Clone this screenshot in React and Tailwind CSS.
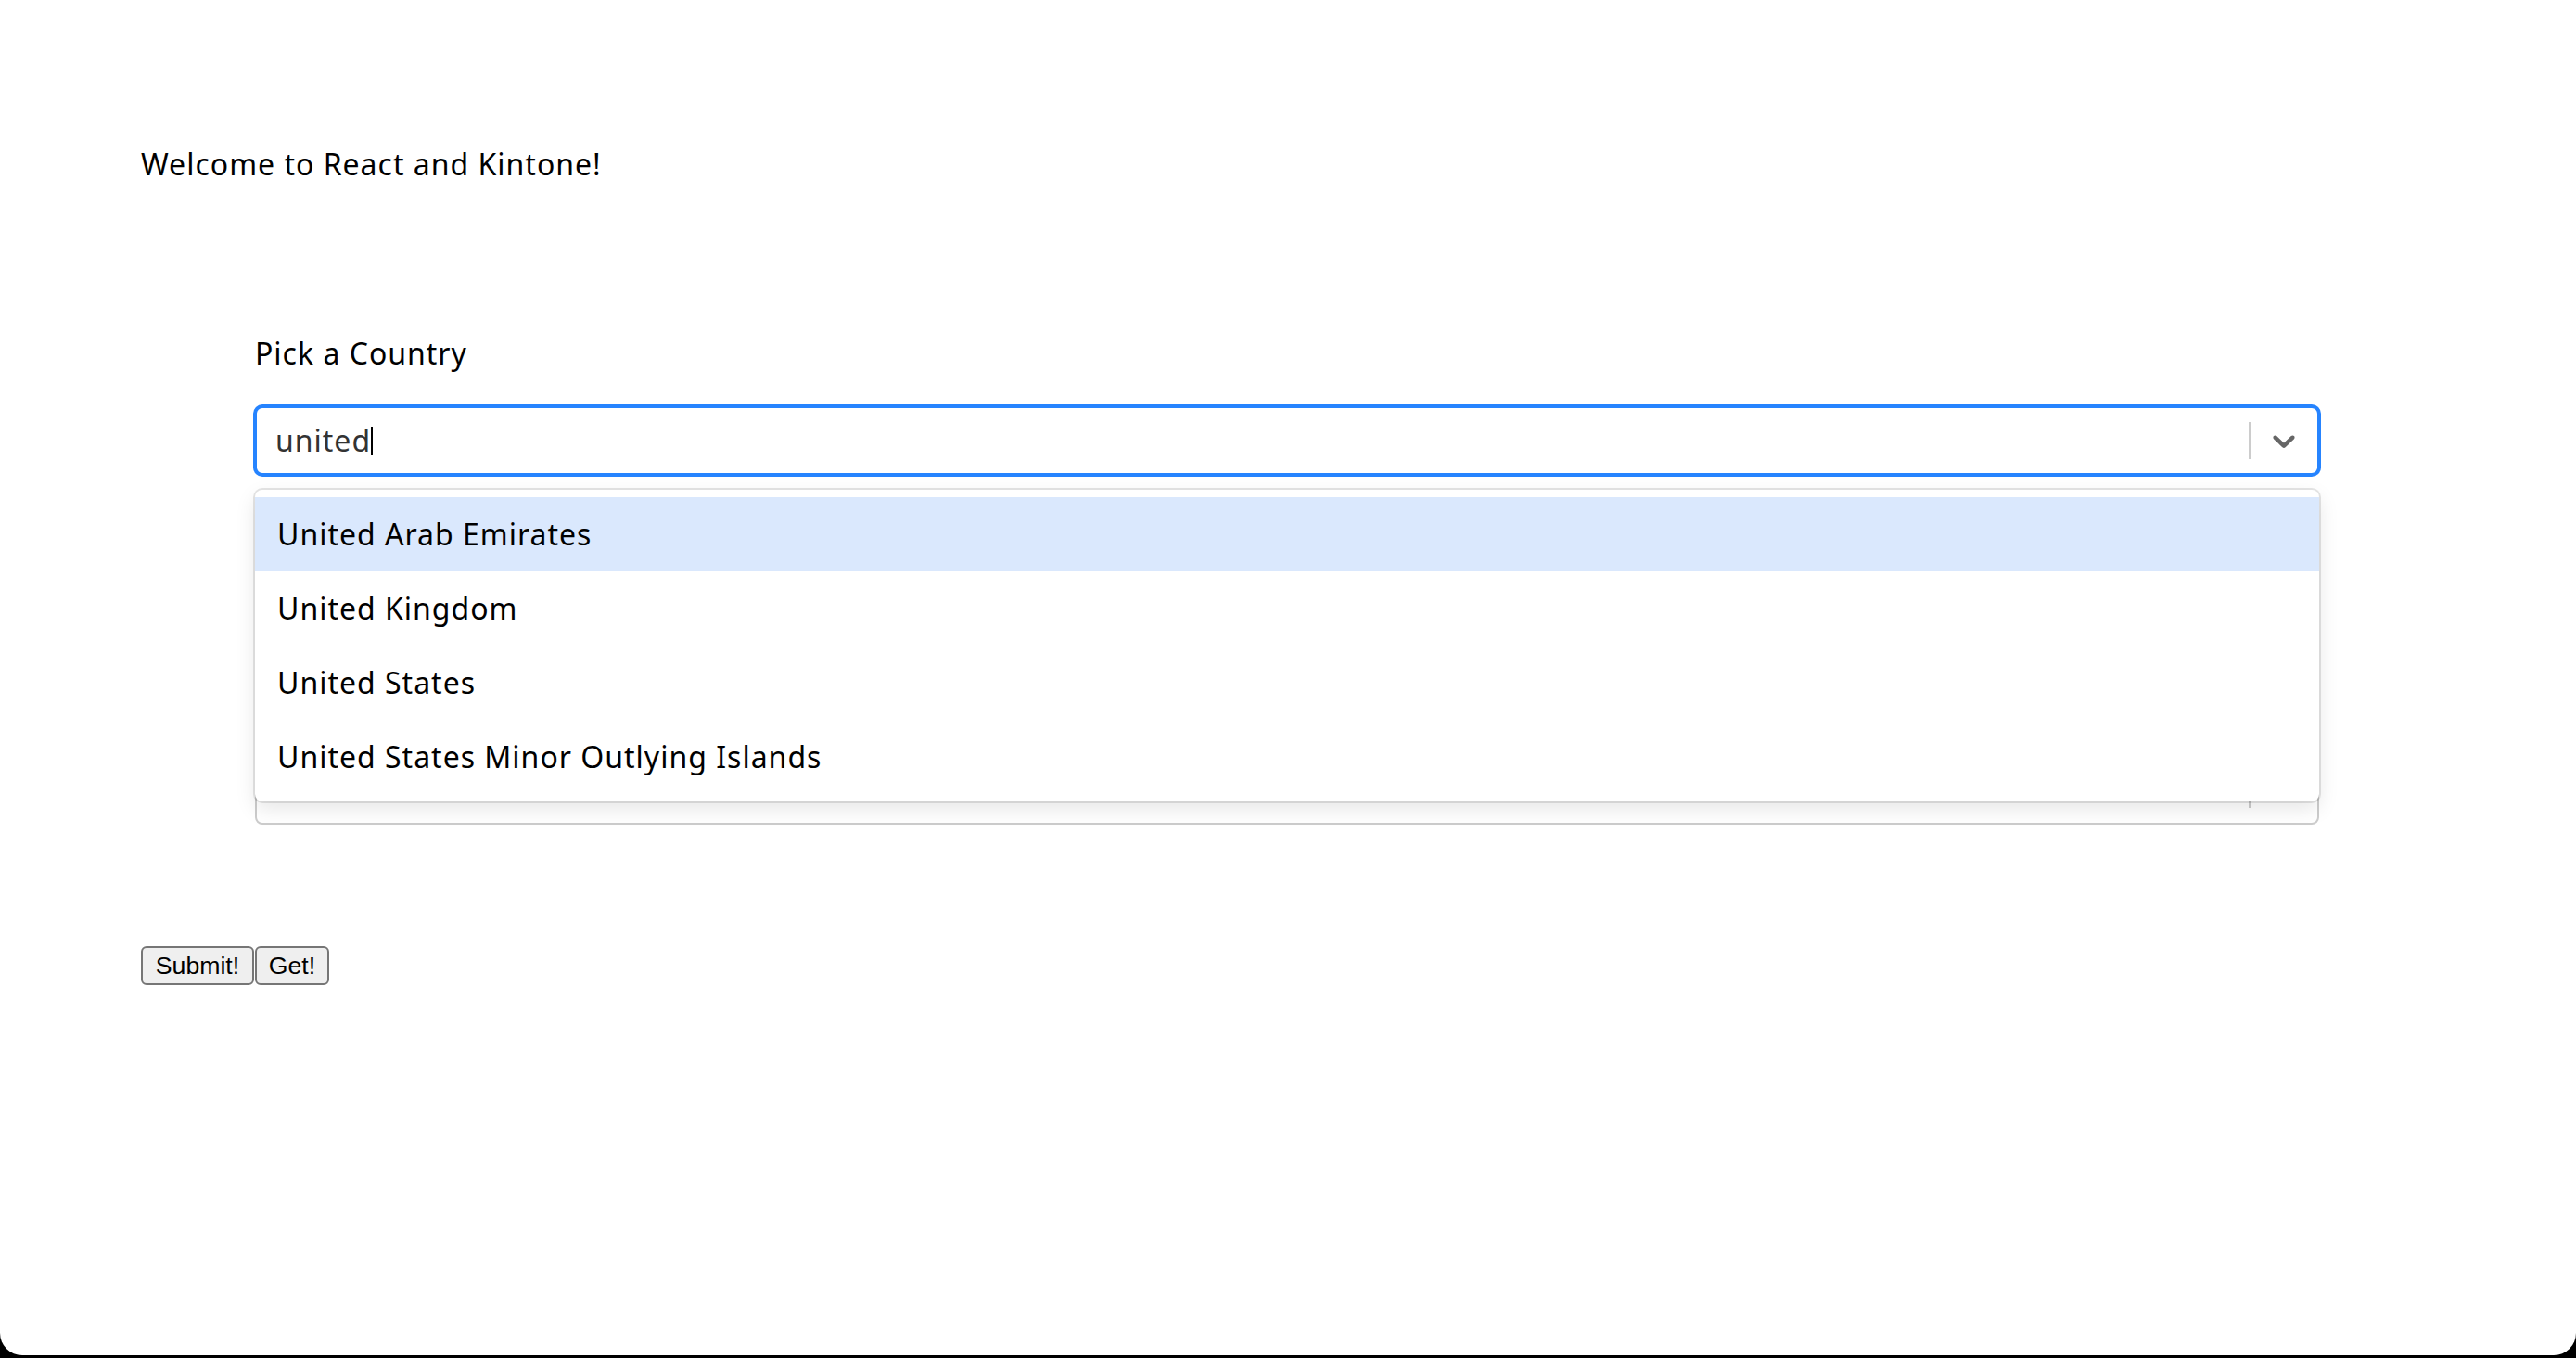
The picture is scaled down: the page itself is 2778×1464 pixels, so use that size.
import React from "react";

const options = [
  "United Arab Emirates",
  "United Kingdom",
  "United States",
  "United States Minor Outlying Islands",
];

function Chevron({ className }) {
  return (
    <svg viewBox="0 0 20 20" className={className} fill="currentColor" aria-hidden="true">
      <path d="M4.516 7.548c0.436-0.446 1.043-0.481 1.576 0l3.908 3.747 3.908-3.747c0.533-0.481 1.141-0.446 1.574 0 0.436 0.445 0.408 1.197 0 1.615-0.406 0.418-4.695 4.502-4.695 4.502-0.217 0.223-0.502 0.335-0.787 0.335s-0.57-0.112-0.789-0.335c0 0-4.287-4.084-4.695-4.502s-0.436-1.17 0-1.615z" />
    </svg>
  );
}

function Indicators({ focused }) {
  return (
    <div className="flex flex-row items-center self-stretch">
      <span className="w-[2px] h-[40px] bg-[#cccccc]" />
      <div className={`px-[16px] flex items-center ${focused ? "text-[#666666]" : "text-[#cccccc]"}`}>
        <Chevron className="w-[40px] h-[40px]" />
      </div>
    </div>
  );
}

export default function App() {
  return (
    <div className="h-[1464px] bg-black font-['Noto_Sans',sans-serif]">
      <div className="h-[1461px] bg-white rounded-b-[24px] pt-[153px] text-black tracking-[1px]">
        <p className="ml-[152px] text-[32px] leading-[48px]">Welcome to React and Kintone!</p>

        <div className="ml-[275px] w-[2226px] mt-[156px]">
          <label className="block text-[32px] leading-[48px]">Pick a Country</label>

          <div className="relative mt-[33px]">
            <div className="h-[74px] flex flex-row items-center border-2 border-[#2684FF] rounded-[8px] bg-white shadow-[0_0_0_2px_#2684FF]">
              <div className="flex-1 flex items-center pl-[20px]">
                <span className="text-[32px] leading-[48px] text-[#333333]">united</span>
                <span className="w-[2px] h-[30px] bg-black" />
              </div>
              <Indicators focused />
            </div>

            <div className="absolute left-0 right-0 top-full mt-[16px] z-10 bg-white rounded-[8px] py-[8px] shadow-[0_0_0_2px_rgba(0,0,0,0.1),0_8px_22px_rgba(0,0,0,0.1)]">
              {options.map((name, i) => (
                <div
                  key={name}
                  className={`h-[80px] px-[24px] flex items-center text-[32px] ${i === 0 ? "bg-[#DAE8FD]" : "bg-white"}`}
                >
                  {name}
                </div>
              ))}
            </div>
          </div>

          <div className="mt-[301px] h-[76px] flex flex-row items-center border-2 border-[#cccccc] rounded-[8px] bg-white">
            <div className="flex-1" />
            <Indicators />
          </div>
        </div>

        <div className="ml-[152px] mt-[131px] flex flex-row gap-[1px] tracking-normal font-['Liberation_Sans',Arial,sans-serif]">
          <button className="h-[42px] w-[122px] bg-[#efefef] border-2 border-[#767676] rounded-[6px] text-[26.67px] leading-none text-black">
            Submit!
          </button>
          <button className="h-[42px] w-[80px] bg-[#efefef] border-2 border-[#767676] rounded-[6px] text-[26.67px] leading-none text-black">
            Get!
          </button>
        </div>
      </div>
    </div>
  );
}
